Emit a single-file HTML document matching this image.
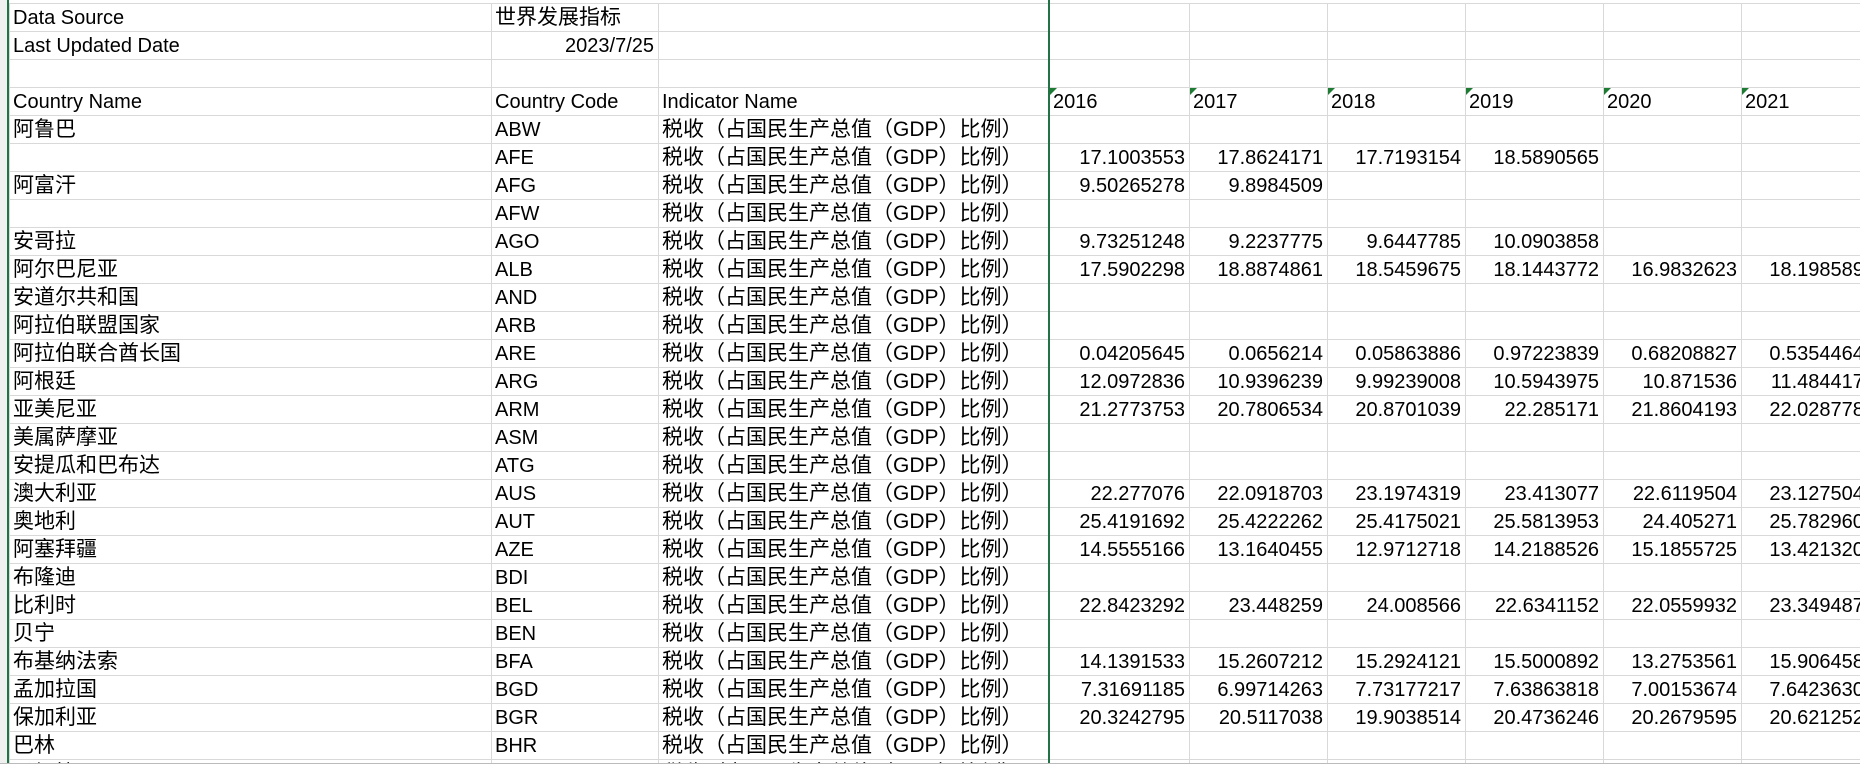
<!DOCTYPE html>
<html><head><meta charset="utf-8"><style>
html,body{margin:0;padding:0;background:#fff;width:1860px;height:767px;overflow:hidden;position:relative}
body{font-family:"Liberation Sans","Noto Sans CJK SC",sans-serif;font-size:20px;color:#000}
table{position:absolute;left:9px;top:3px;border-collapse:collapse;table-layout:fixed;width:1870px}
td{border:1px solid #d9d9d9;height:28px;box-sizing:border-box;padding:0 3px;white-space:nowrap;overflow:hidden;line-height:26px;vertical-align:bottom}
td.c{font-size:21px}
td.n{text-align:right;padding-right:4px}
td.y{position:relative}
td.y:before{content:"";position:absolute;left:0;top:0;border-top:7px solid #1e7b34;border-right:7px solid transparent}
#rh{position:absolute;left:0;top:0;width:7px;height:767px;background:#f0f0f0;border-right:2px solid #217346}
#gl{position:absolute;left:1048px;top:0;width:2px;height:767px;background:#217346}
#tabs{position:absolute;left:0;top:763px;width:1860px;height:4px;background:#fff;border-top:1px solid #bbb}
</style></head><body>
<div id="rh"></div>
<table>
<colgroup><col style="width:482px"><col style="width:167px"><col style="width:391px"><col style="width:140px"><col style="width:138px"><col style="width:138px"><col style="width:138px"><col style="width:138px"><col style="width:138px"></colgroup>
<tr><td>Data Source</td><td class="c">世界发展指标</td><td></td><td></td><td></td><td></td><td></td><td></td><td></td></tr>
<tr><td>Last Updated Date</td><td class="n">2023/7/25</td><td></td><td></td><td></td><td></td><td></td><td></td><td></td></tr>
<tr><td></td><td></td><td></td><td></td><td></td><td></td><td></td><td></td><td></td></tr>
<tr><td>Country Name</td><td>Country Code</td><td>Indicator Name</td><td class="y">2016</td><td class="y">2017</td><td class="y">2018</td><td class="y">2019</td><td class="y">2020</td><td class="y">2021</td></tr>
<tr><td class="c">阿鲁巴</td><td>ABW</td><td class="c">税收（占国民生产总值（GDP）比例）</td><td></td><td></td><td></td><td></td><td></td><td></td></tr>
<tr><td></td><td>AFE</td><td class="c">税收（占国民生产总值（GDP）比例）</td><td class="n">17.1003553</td><td class="n">17.8624171</td><td class="n">17.7193154</td><td class="n">18.5890565</td><td></td><td></td></tr>
<tr><td class="c">阿富汗</td><td>AFG</td><td class="c">税收（占国民生产总值（GDP）比例）</td><td class="n">9.50265278</td><td class="n">9.8984509</td><td></td><td></td><td></td><td></td></tr>
<tr><td></td><td>AFW</td><td class="c">税收（占国民生产总值（GDP）比例）</td><td></td><td></td><td></td><td></td><td></td><td></td></tr>
<tr><td class="c">安哥拉</td><td>AGO</td><td class="c">税收（占国民生产总值（GDP）比例）</td><td class="n">9.73251248</td><td class="n">9.2237775</td><td class="n">9.6447785</td><td class="n">10.0903858</td><td></td><td></td></tr>
<tr><td class="c">阿尔巴尼亚</td><td>ALB</td><td class="c">税收（占国民生产总值（GDP）比例）</td><td class="n">17.5902298</td><td class="n">18.8874861</td><td class="n">18.5459675</td><td class="n">18.1443772</td><td class="n">16.9832623</td><td class="n">18.1985892</td></tr>
<tr><td class="c">安道尔共和国</td><td>AND</td><td class="c">税收（占国民生产总值（GDP）比例）</td><td></td><td></td><td></td><td></td><td></td><td></td></tr>
<tr><td class="c">阿拉伯联盟国家</td><td>ARB</td><td class="c">税收（占国民生产总值（GDP）比例）</td><td></td><td></td><td></td><td></td><td></td><td></td></tr>
<tr><td class="c">阿拉伯联合酋长国</td><td>ARE</td><td class="c">税收（占国民生产总值（GDP）比例）</td><td class="n">0.04205645</td><td class="n">0.0656214</td><td class="n">0.05863886</td><td class="n">0.97223839</td><td class="n">0.68208827</td><td class="n">0.53544641</td></tr>
<tr><td class="c">阿根廷</td><td>ARG</td><td class="c">税收（占国民生产总值（GDP）比例）</td><td class="n">12.0972836</td><td class="n">10.9396239</td><td class="n">9.99239008</td><td class="n">10.5943975</td><td class="n">10.871536</td><td class="n">11.4844171</td></tr>
<tr><td class="c">亚美尼亚</td><td>ARM</td><td class="c">税收（占国民生产总值（GDP）比例）</td><td class="n">21.2773753</td><td class="n">20.7806534</td><td class="n">20.8701039</td><td class="n">22.285171</td><td class="n">21.8604193</td><td class="n">22.0287781</td></tr>
<tr><td class="c">美属萨摩亚</td><td>ASM</td><td class="c">税收（占国民生产总值（GDP）比例）</td><td></td><td></td><td></td><td></td><td></td><td></td></tr>
<tr><td class="c">安提瓜和巴布达</td><td>ATG</td><td class="c">税收（占国民生产总值（GDP）比例）</td><td></td><td></td><td></td><td></td><td></td><td></td></tr>
<tr><td class="c">澳大利亚</td><td>AUS</td><td class="c">税收（占国民生产总值（GDP）比例）</td><td class="n">22.277076</td><td class="n">22.0918703</td><td class="n">23.1974319</td><td class="n">23.413077</td><td class="n">22.6119504</td><td class="n">23.1275041</td></tr>
<tr><td class="c">奥地利</td><td>AUT</td><td class="c">税收（占国民生产总值（GDP）比例）</td><td class="n">25.4191692</td><td class="n">25.4222262</td><td class="n">25.4175021</td><td class="n">25.5813953</td><td class="n">24.405271</td><td class="n">25.7829601</td></tr>
<tr><td class="c">阿塞拜疆</td><td>AZE</td><td class="c">税收（占国民生产总值（GDP）比例）</td><td class="n">14.5555166</td><td class="n">13.1640455</td><td class="n">12.9712718</td><td class="n">14.2188526</td><td class="n">15.1855725</td><td class="n">13.4213201</td></tr>
<tr><td class="c">布隆迪</td><td>BDI</td><td class="c">税收（占国民生产总值（GDP）比例）</td><td></td><td></td><td></td><td></td><td></td><td></td></tr>
<tr><td class="c">比利时</td><td>BEL</td><td class="c">税收（占国民生产总值（GDP）比例）</td><td class="n">22.8423292</td><td class="n">23.448259</td><td class="n">24.008566</td><td class="n">22.6341152</td><td class="n">22.0559932</td><td class="n">23.3494871</td></tr>
<tr><td class="c">贝宁</td><td>BEN</td><td class="c">税收（占国民生产总值（GDP）比例）</td><td></td><td></td><td></td><td></td><td></td><td></td></tr>
<tr><td class="c">布基纳法索</td><td>BFA</td><td class="c">税收（占国民生产总值（GDP）比例）</td><td class="n">14.1391533</td><td class="n">15.2607212</td><td class="n">15.2924121</td><td class="n">15.5000892</td><td class="n">13.2753561</td><td class="n">15.9064581</td></tr>
<tr><td class="c">孟加拉国</td><td>BGD</td><td class="c">税收（占国民生产总值（GDP）比例）</td><td class="n">7.31691185</td><td class="n">6.99714263</td><td class="n">7.73177217</td><td class="n">7.63863818</td><td class="n">7.00153674</td><td class="n">7.64236301</td></tr>
<tr><td class="c">保加利亚</td><td>BGR</td><td class="c">税收（占国民生产总值（GDP）比例）</td><td class="n">20.3242795</td><td class="n">20.5117038</td><td class="n">19.9038514</td><td class="n">20.4736246</td><td class="n">20.2679595</td><td class="n">20.6212521</td></tr>
<tr><td class="c">巴林</td><td>BHR</td><td class="c">税收（占国民生产总值（GDP）比例）</td><td></td><td></td><td></td><td></td><td></td><td></td></tr>
<tr><td class="c">孟加拉</td><td>BHS</td><td class="c">税收（占国民生产总值（GDP）比例）</td><td></td><td></td><td></td><td></td><td></td><td></td></tr>
</table>
<div id="gl"></div>
<div id="tabs"></div>
</body></html>
